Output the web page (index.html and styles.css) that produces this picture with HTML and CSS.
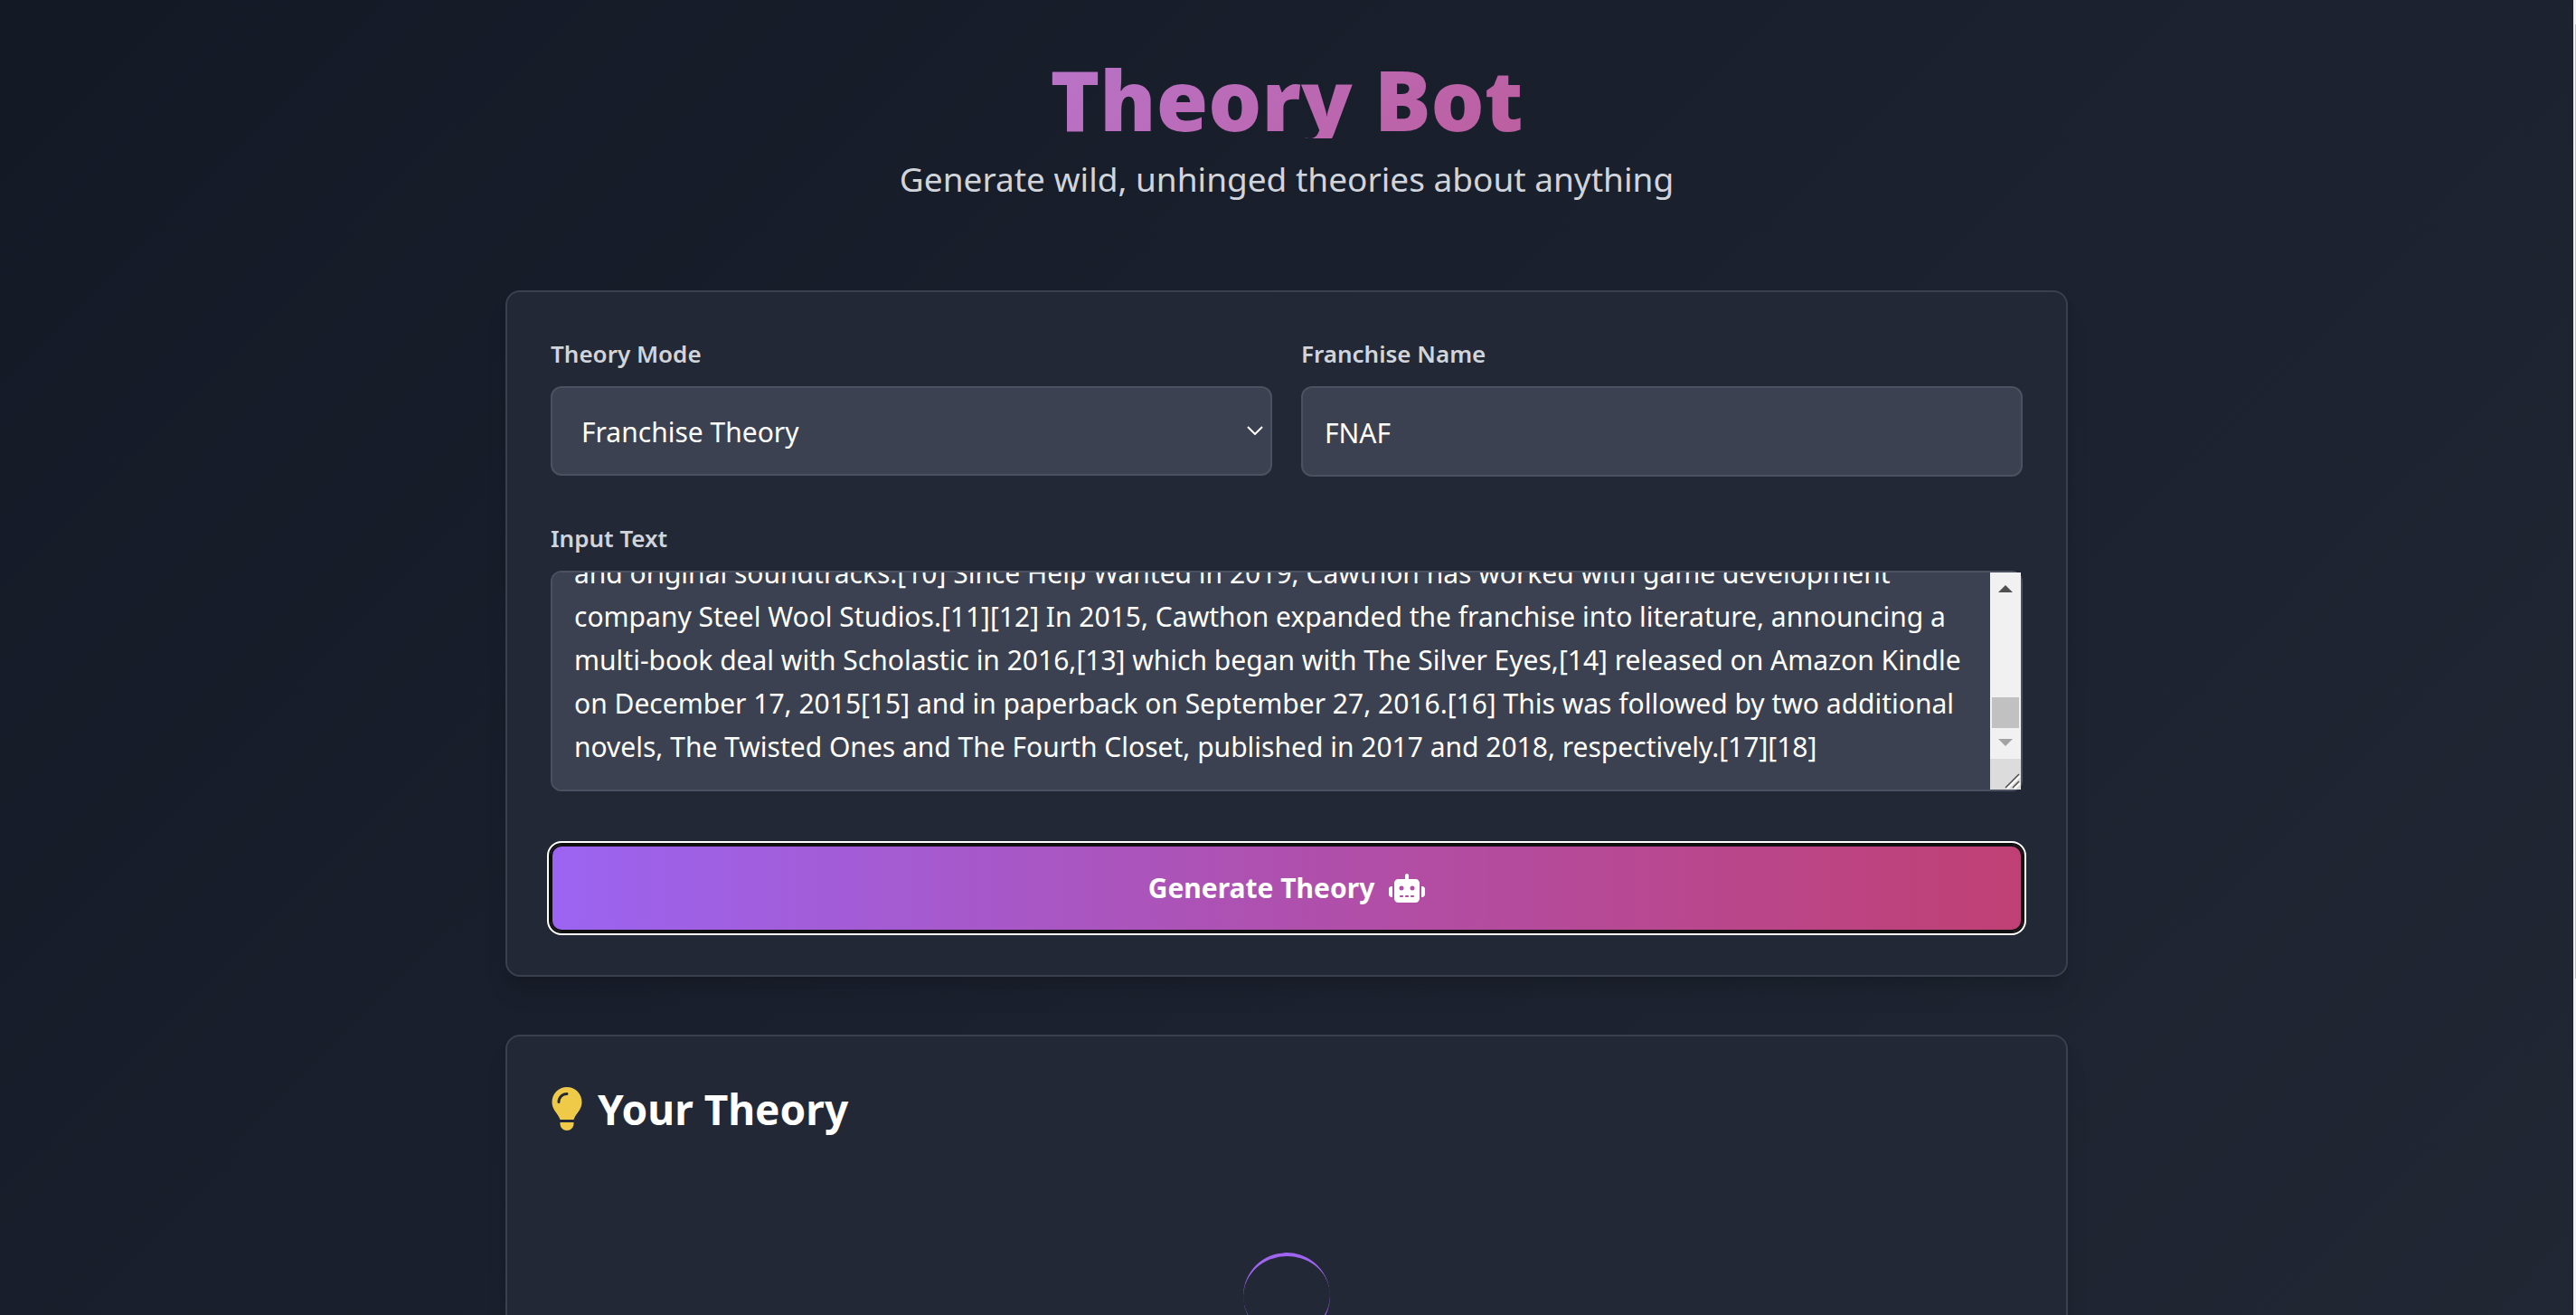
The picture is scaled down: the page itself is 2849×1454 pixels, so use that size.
FILE: index.html
```html
<!DOCTYPE html>
<html lang="en">
<head>
<meta charset="utf-8">
<meta name="viewport" content="width=device-width, initial-scale=1">
<title>Theory Bot</title>
<link rel="stylesheet" href="styles.css">
</head>
<body>
<div class="page">
  <div class="container">
    <header class="hero">
      <h1 class="hero-title">Theory Bot</h1>
      <p class="hero-subtitle">Generate wild, unhinged theories about anything</p>
    </header>
    <main class="sections">
      <form class="card">
        <div class="field-row">
          <div class="field">
            <label class="label" for="mode">Theory Mode</label>
            <div class="control-wrap">
              <select class="control select" id="mode">
                <option>Franchise Theory</option>
              </select>
              <svg class="chevron" viewBox="0 0 18 10" aria-hidden="true"><path d="M1 1l8 8 8-8" fill="none" stroke="#fff" stroke-width="2"/></svg>
            </div>
          </div>
          <div class="field">
            <label class="label" for="franchise">Franchise Name</label>
            <input class="control input" id="franchise" type="text" value="FNAF">
          </div>
        </div>
        <div class="field">
          <label class="label" for="source">Input Text</label>
          <div class="control-wrap">
            <textarea class="control textarea" id="source">and original soundtracks.[10] Since Help Wanted in 2019, Cawthon has worked with game development
company Steel Wool Studios.[11][12] In 2015, Cawthon expanded the franchise into literature, announcing a
multi-book deal with Scholastic in 2016,[13] which began with The Silver Eyes,[14] released on Amazon Kindle
on December 17, 2015[15] and in paperback on September 27, 2016.[16] This was followed by two additional
novels, The Twisted Ones and The Fourth Closet, published in 2017 and 2018, respectively.[17][18]</textarea>
            <svg class="scrollbar" viewBox="0 0 34 240" aria-hidden="true">
              <rect width="34" height="206" fill="#f1f1f1"/>
              <path d="M9 22l8-8 8 8z" fill="#505050"/>
              <rect x="2" y="138" width="30" height="34" fill="#c1c1c1"/>
              <path d="M9 184l8 8 8-8z" fill="#a3a3a3"/>
              <rect y="206" width="34" height="34" fill="#dcdcdc"/>
              <path d="M19 239l14-14M27 239l6-6" stroke="#fff" stroke-width="2"/>
              <path d="M17 238l15-15M25 238l7-7" stroke="#505050" stroke-width="1.5"/>
            </svg>
          </div>
        </div>
        <button class="generate" type="button">
          <span>Generate Theory</span>
          <svg class="robot" viewBox="0 0 640 512" fill="currentColor" aria-hidden="true"><path d="M320 0c17.7 0 32 14.3 32 32V96H472c39.8 0 72 32.2 72 72V440c0 39.8-32.2 72-72 72H168c-39.8 0-72-32.2-72-72V168c0-39.8 32.2-72 72-72H288V32c0-17.7 14.3-32 32-32zM208 384c-8.8 0-16 7.2-16 16s7.2 16 16 16h32c8.8 0 16-7.2 16-16s-7.2-16-16-16H208zm96 0c-8.8 0-16 7.2-16 16s7.2 16 16 16h32c8.8 0 16-7.2 16-16s-7.2-16-16-16H304zm96 0c-8.8 0-16 7.2-16 16s7.2 16 16 16h32c8.8 0 16-7.2 16-16s-7.2-16-16-16H400zM264 256a40 40 0 1 0 -80 0 40 40 0 1 0 80 0zm152 40a40 40 0 1 0 0-80 40 40 0 1 0 0 80zM48 224H64V416H48c-26.5 0-48-21.5-48-48V272c0-26.5 21.5-48 48-48zm544 0c26.5 0 48 21.5 48 48v96c0 26.5-21.5 48-48 48H576V224h16z"/></svg>
        </button>
      </form>
      <section class="card">
        <h2 class="result-title">
          <svg class="bulb" viewBox="0 0 384 512" fill="currentColor" aria-hidden="true"><path d="M272 384c9.6-31.9 29.5-59.1 49.2-86.2l0 0c5.2-7.1 10.4-14.2 15.4-21.4c19.8-28.5 31.4-63 31.4-100.3C368 78.8 289.2 0 192 0S16 78.8 16 176c0 37.3 11.6 71.9 31.4 100.3c5 7.2 10.2 14.3 15.4 21.4l0 0c19.8 27.1 39.7 54.4 49.2 86.2H272zM192 512c44.2 0 80-35.8 80-80V416H112v16c0 44.2 35.8 80 80 80zM112 176c0 8.8-7.2 16-16 16s-16-7.2-16-16c0-61.9 50.1-112 112-112c8.8 0 16 7.2 16 16s-7.2 16-16 16c-44.2 0-80 35.8-80 80z"/></svg>
          <span>Your Theory</span>
        </h2>
        <div class="loading" role="status" aria-label="Loading"><div class="spinner"></div></div>
      </section>
    </main>
  </div>
</div>
<div class="page-scrollbar" aria-hidden="true"></div>
<script>
  var source = document.getElementById('source');
  source.scrollTop = source.scrollHeight;
</script>
</body>
</html>
```
FILE: styles.css
```css
*, *::before, *::after { box-sizing: border-box; }

body {
  margin: 0;
  font-family: "Noto Sans", "Open Sans", sans-serif;
  color: #fff;
  background: #181e2b;
}

.page {
  height: 100vh;
  overflow: hidden;
  padding: 57px 3px 0 0;
  background: linear-gradient(135deg, #141926, #222935) 0 0 / 100% 130vh no-repeat;
}

.container {
  max-width: 1792px;
  margin: 0 auto;
  padding: 0 32px;
}

.hero {
  margin-bottom: 94px;
  text-align: center;
}

/* The gradient is clipped to the heading's own box, which cuts the descender. */
.hero-title {
  height: 96px;
  margin: 0 0 16px;
  font-size: 93px;
  font-weight: 900;
  line-height: 104px;
  color: transparent;
  background: linear-gradient(135deg, #b588f0, #c14a78);
  -webkit-background-clip: text;
  background-clip: text;
}

.hero-subtitle {
  margin: 0;
  font-size: 37px;
  line-height: 58px;
  color: #d1d5db;
}

.sections {
  display: flex;
  flex-direction: column;
  gap: 64px;
}

.card {
  padding: 48px;
  background: #222835;
  border: 2px solid #3a404e;
  border-radius: 16px;
  box-shadow: 0 20px 30px -6px rgba(0, 0, 0, 0.1), 0 8px 12px -4px rgba(0, 0, 0, 0.1);
}

.field-row {
  display: grid;
  grid-template-columns: 1fr 1fr;
  gap: 32px;
  margin-bottom: 48px;
}

.label {
  display: block;
  margin-bottom: 16px;
  font-size: 26px;
  font-weight: 600;
  line-height: 40px;
  color: #d1d5db;
}

.control-wrap { position: relative; }

.control {
  display: block;
  width: 100%;
  margin: 0;
  padding: 25px 24px 23px;
  font: inherit;
  font-size: 30px;
  line-height: 48px;
  color: #fff;
  background: #3b4150;
  border: 2px solid #4b5160;
  border-radius: 12px;
  outline: none;
}

.input { height: 100px; }

.select {
  height: 99px;
  padding: 25px 32px 22px;
  appearance: none;
}

.chevron {
  position: absolute;
  top: 44px;
  right: 10px;
  width: 18px;
  height: 10px;
}

.textarea {
  height: 244px;
  padding-right: 58px;
  resize: none;
}

.scrollbar {
  position: absolute;
  top: 2px;
  right: 2px;
  width: 34px;
  height: 240px;
}

.generate {
  display: flex;
  align-items: center;
  justify-content: center;
  gap: 16px;
  width: 100%;
  margin-top: 59px;
  padding: 24px;
  font: inherit;
  font-size: 30px;
  font-weight: 700;
  line-height: 48px;
  color: #fff;
  background: linear-gradient(90deg, #9b64f1, #af50ae, #c04074);
  border: 0;
  border-radius: 12px;
  outline: 2px solid #fff;
  outline-offset: 2px;
  box-shadow: 0 0 0 2px #101010, inset 0 0 0 2px #101010;
}

.robot {
  width: 40px;
  height: 32px;
}

.result-title {
  display: flex;
  align-items: center;
  gap: 16px;
  margin: 0;
  font-size: 46px;
  font-weight: 700;
  line-height: 64px;
}

.bulb {
  width: 36px;
  height: 48px;
  color: #eeca48;
}

.loading {
  display: flex;
  justify-content: center;
  padding: 127px 0;
}

.spinner {
  width: 96px;
  height: 96px;
  border: 0 solid #a064f0;
  border-width: 4px 0;
  border-radius: 50%;
  transform: rotate(-5deg);
}

.page-scrollbar {
  position: fixed;
  top: 0;
  right: 0;
  bottom: 0;
  width: 3px;
  background: linear-gradient(#c1c1c1, #c1c1c1) 2px 27px / 1px 1055px no-repeat #f1f1f1;
}
```
